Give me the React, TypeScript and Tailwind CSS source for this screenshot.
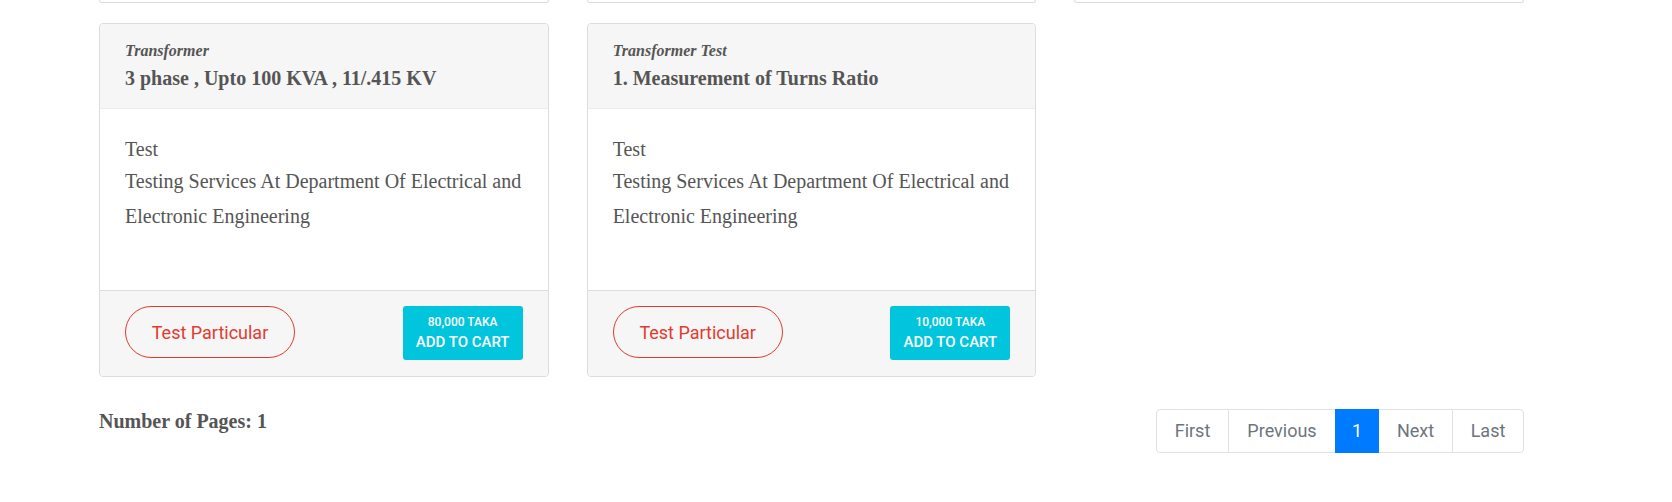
const serif = { fontFamily: '"Liberation Serif", "Times New Roman", serif' };
const sans = { fontFamily: 'Roboto, "Noto Sans", sans-serif' };

const services = [
  {
    category: "Transformer",
    title: "3 phase , Upto 100 KVA , 11/.415 KV",
    price: "80,000",
  },
  {
    category: "Transformer Test",
    title: "1. Measurement of Turns Ratio",
    price: "10,000",
  },
];

const pages = [
  { label: "First", w: "w-[71px]" },
  { label: "Previous", w: "w-[107px]" },
  { label: "1", w: "w-[44px]", active: true },
  { label: "Next", w: "w-[73px]" },
  { label: "Last", w: "w-[71px]" },
];

export default function App() {
  return (
    <div className="min-h-[502px] bg-white text-[#555]">
      <div className="ml-[99px] w-[1425px]">
        {/* tail of previous row */}
        <div className="grid grid-cols-3 gap-[38px]">
          {[0, 1, 2].map((i) => (
            <div key={i} className="h-[3px] border-x border-b border-[#dcdcdc] rounded-b-[4px]" />
          ))}
        </div>

        <div className="grid grid-cols-3 gap-[38px] mt-[20px]">
          {services.map((s) => (
            <div
              key={s.title}
              className="flex flex-col h-[354px] border border-[#dcdcdc] rounded-[4px] overflow-hidden"
            >
              <div className="h-[85px] bg-[#f6f6f6] border-b border-[#ececec] px-[25px] pt-[17px]" style={serif}>
                <p className="text-[16px] leading-[20px] italic font-bold">{s.category}</p>
                <h3 className="text-[20px] leading-[26px] font-bold mt-[4px]">{s.title}</h3>
              </div>
              <div className="flex-1 px-[25px] pt-[24px]" style={serif}>
                <p className="text-[20px] leading-[32px]">Test</p>
                <p className="text-[20px] leading-[35px] -mt-[1px]">
                  Testing Services At Department Of Electrical and Electronic Engineering
                </p>
              </div>
              <div
                className="h-[86px] bg-[#f6f6f6] border-t border-[#dcdcdc] px-[25px] pt-[15px] flex items-start justify-between"
                style={sans}
              >
                <button className="w-[170px] h-[52px] rounded-full border border-[#e23a2e] text-[#e23a2e] text-[18px] bg-transparent">
                  Test Particular
                </button>
                <button className="w-[120px] h-[54px] rounded-[3px] bg-[#00c5dc] text-white flex flex-col items-center justify-center">
                  <span className="text-[12px] leading-[18px] font-medium">{s.price} TAKA</span>
                  <span className="text-[15px] leading-[22px] font-medium">ADD TO CART</span>
                </button>
              </div>
            </div>
          ))}
        </div>

        <div className="flex items-start justify-between mt-[32px]">
          <p className="text-[20px] leading-[24px] font-bold" style={serif}>
            Number of Pages: 1
          </p>
          <div className="flex h-[44px] border border-[#dee2e6] rounded-[4px]" style={sans}>
            {pages.map((p, i) => (
              <div
                key={p.label}
                className={`${p.w} flex items-center justify-center pb-[2px] text-[18px] ${
                  i > 0 && !p.active && !pages[i - 1].active ? "border-l border-[#dee2e6]" : ""
                } ${p.active ? "bg-[#007bff] text-white -my-px h-[44px]" : "text-[#6c757d]"}`}
              >
                {p.label}
              </div>
            ))}
          </div>
        </div>
      </div>
    </div>
  );
}
